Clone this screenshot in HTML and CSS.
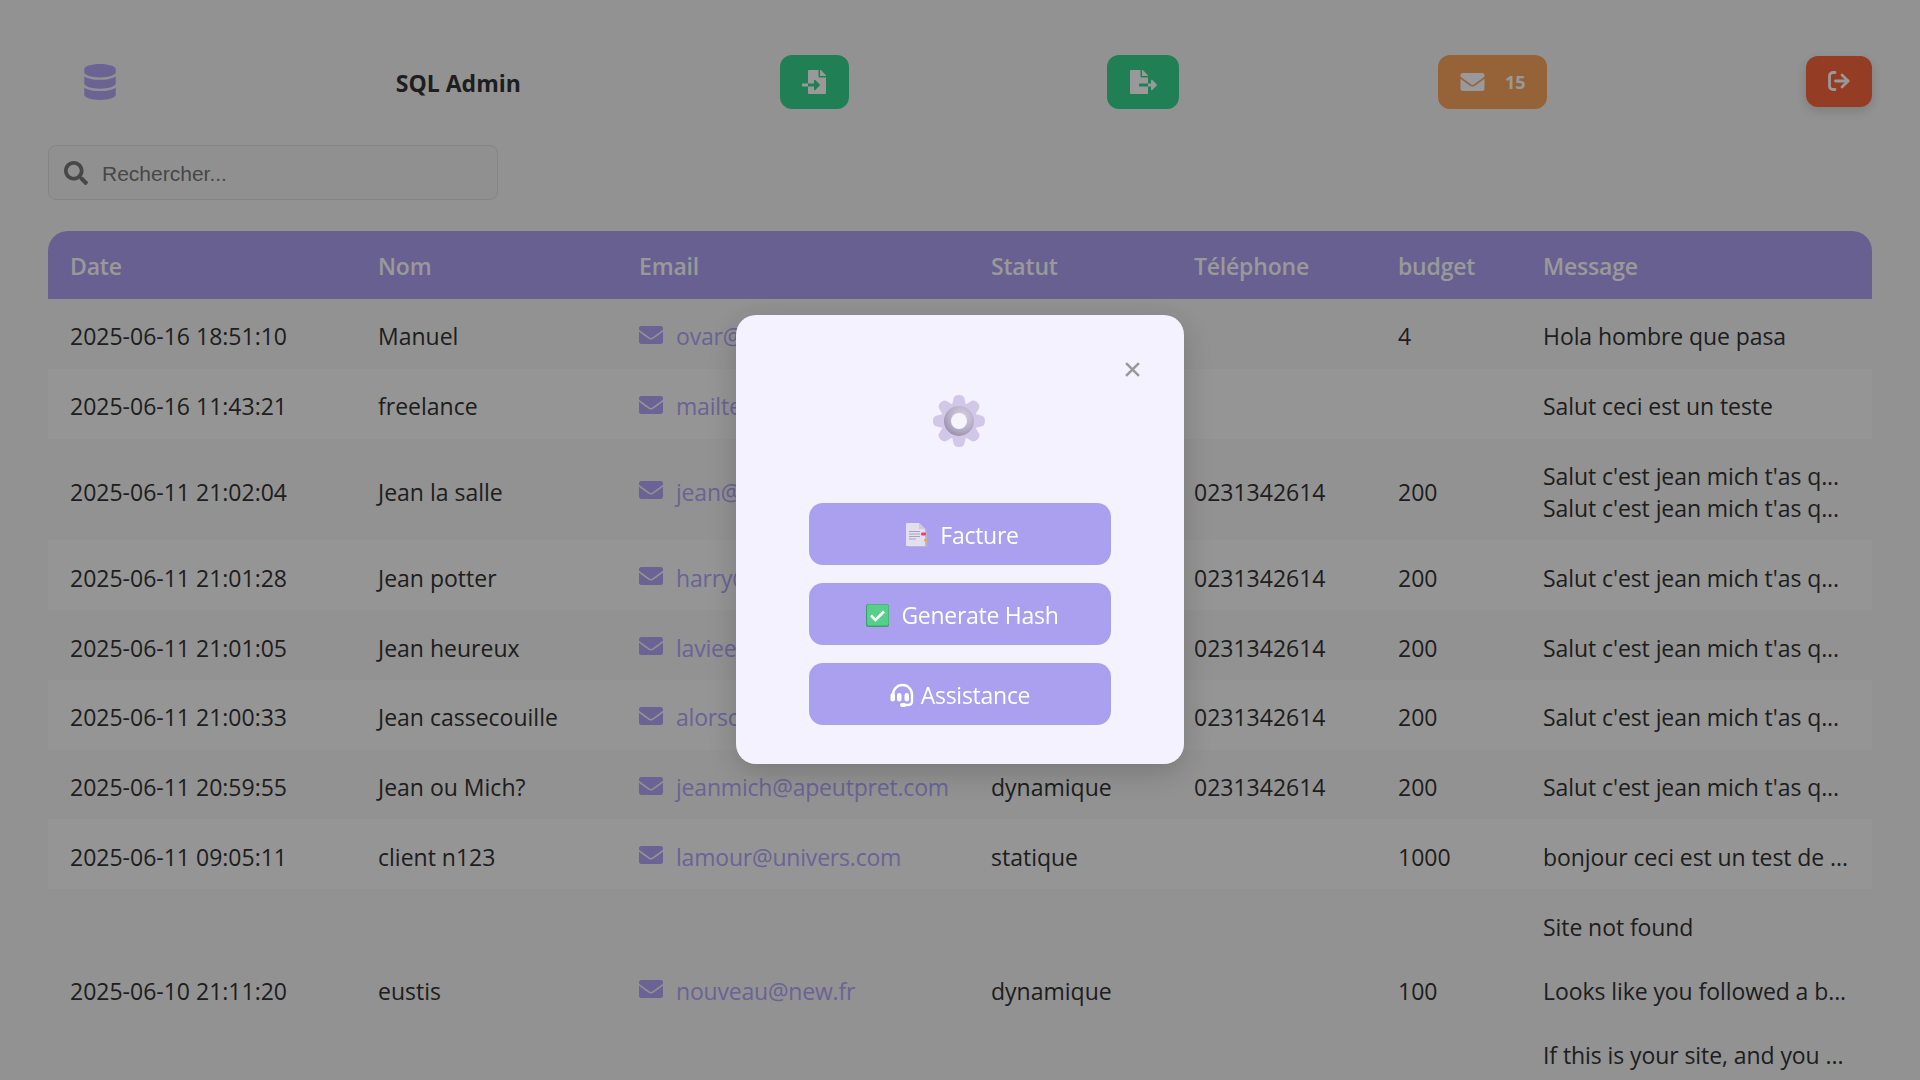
FILE: index.html
```html
<!DOCTYPE html>
<html lang="fr">
<head>
    <meta charset="UTF-8" />
    <title>SQL Admin</title>
    <link rel="stylesheet" href="styles.css">
</head>
<body>
    <svg class="icon-defs" width="0" height="0" aria-hidden="true">
        <symbol id="i-envelope" viewBox="0 64 512 384">
            <path d="M502.3 190.8c3.9-3.1 9.7-.2 9.7 4.7V400c0 26.5-21.5 48-48 48H48c-26.5 0-48-21.5-48-48V195.6c0-5 5.7-7.8 9.7-4.7 22.4 17.4 52.1 39.5 154.1 113.6 21.1 15.4 56.7 47.8 92.2 47.6 35.7.3 72-32.8 92.3-47.6 102-74.1 131.6-96.3 154-113.7zM256 320c23.2.4 56.6-29.2 73.4-41.4 132.7-96.3 142.8-104.7 173.4-128.7 5.8-4.5 9.2-11.5 9.2-18.9v-19c0-26.5-21.5-48-48-48H48C21.5 64 0 85.5 0 112v19c0 7.4 3.4 14.3 9.2 18.9 30.6 23.9 40.7 32.4 173.4 128.7 16.8 12.2 50.2 41.8 73.4 41.4z"/>
        </symbol>
    </svg>

    <header class="topbar">
        <div class="logo">
            <svg viewBox="0 0 448 512" width="32" height="36" fill="currentColor"><path d="M448 73.143v45.714C448 159.143 347.667 192 224 192S0 159.143 0 118.857V73.143C0 32.857 100.333 0 224 0s224 32.857 224 73.143zM448 176v102.857C448 319.143 347.667 352 224 352S0 319.143 0 278.857V176c48.125 33.143 136.208 48.572 224 48.572S399.874 209.143 448 176zm0 160v102.857C448 479.143 347.667 512 224 512S0 479.143 0 438.857V336c48.125 33.143 136.208 48.572 224 48.572S399.874 369.143 448 336z"/></svg>
        </div>
        <h1 class="title">SQL Admin</h1>
        <button class="top-btn btn-import">
            <svg viewBox="0 0 512 512" width="24" height="24" fill="currentColor"><path d="M16 288c-8.800 0-16 7.200-16 16v32c0 8.800 7.200 16 16 16h112v-64zm489-183L407.100 7c-4.500-4.500-10.600-7-17-7H384v128h128v-6.100c0-6.300-2.500-12.400-7-16.900zm-153 31V0H152c-13.300 0-24 10.700-24 24v264h128v-65.200c0-14.300 17.300-21.400 27.400-11.300L379 308c6.600 6.700 6.600 17.400 0 24l-95.700 96.400c-10.100 10.100-27.400 3-27.400-11.300V352H128v136c0 13.300 10.700 24 24 24h336c13.300 0 24-10.700 24-24V160H376c-13.200 0-24-10.800-24-24z"/></svg>
        </button>
        <button class="top-btn btn-export">
            <svg viewBox="0 0 576 512" width="27" height="24" fill="currentColor"><path d="M384 121.900c0-6.300-2.500-12.400-7-16.900L279.100 7c-4.500-4.500-10.600-7-17-7H256v128h128zM571 308l-95.700-96.400c-10.100-10.100-27.400-3-27.400 11.300V288h-64v64h64v65.200c0 14.300 17.300 21.400 27.400 11.300L571 332c6.600-6.700 6.600-17.400 0-24zm-379 28v-32c0-8.800 7.200-16 16-16h176V160H248c-13.200 0-24-10.800-24-24V0H24C10.700 0 0 10.700 0 24v464c0 13.300 10.700 24 24 24h336c13.300 0 24-10.700 24-24V352H208c-8.800 0-16-7.200-16-16z"/></svg>
        </button>
        <button class="top-btn btn-mail">
            <svg width="25" height="18" fill="currentColor"><use href="#i-envelope"/></svg>
            <span>15</span>
        </button>
        <button class="top-btn btn-logout">
            <svg viewBox="0 0 22 20" width="22" height="20" fill="none" stroke="currentColor" stroke-width="2.800" stroke-linecap="round" stroke-linejoin="round"><path d="M7 1.500H5A3.500 3.500 0 0 0 1.500 5v10A3.500 3.500 0 0 0 5 18.500h2"/><path d="M7.500 10h12.500"/><path d="M14 4l6 6-6 6"/></svg>
        </button>
    </header>

    <div class="search-box">
        <svg viewBox="0 0 512 512" width="24" height="24" fill="currentColor"><path d="M505 442.700L405.300 343c-4.500-4.500-10.600-7-17-7H372c27.600-35.300 44-79.700 44-128C416 93.100 322.900 0 208 0S0 93.100 0 208s93.100 208 208 208c48.300 0 92.700-16.400 128-44v16.300c0 6.400 2.500 12.500 7 17l99.700 99.700c9.400 9.400 24.600 9.400 33.900 0l28.300-28.300c9.400-9.400 9.400-24.600.1-34zM208 336c-70.700 0-128-57.200-128-128 0-70.700 57.200-128 128-128 70.700 0 128 57.200 128 128 0 70.700-57.200 128-128 128z"/></svg>
        <input type="text" placeholder="Rechercher...">
    </div>

    <table class="data-table">
        <colgroup>
            <col class="c-date"><col class="c-nom"><col class="c-email"><col class="c-statut"><col class="c-tel"><col class="c-budget"><col class="c-msg">
        </colgroup>
        <thead>
            <tr><th>Date</th><th>Nom</th><th>Email</th><th>Statut</th><th>Téléphone</th><th>budget</th><th>Message</th></tr>
        </thead>
        <tbody>
            <tr>
                <td>2025-06-16 18:51:10</td><td>Manuel</td>
                <td><a href="#" class="mail"><svg width="24" height="18" fill="currentColor"><use href="#i-envelope"/></svg>ovar@gmail.com</a></td>
                <td>dynamique</td><td></td><td>4</td><td class="msg">Hola hombre que pasa</td>
            </tr>
            <tr>
                <td>2025-06-16 11:43:21</td><td>freelance</td>
                <td><a href="#" class="mail"><svg width="24" height="18" fill="currentColor"><use href="#i-envelope"/></svg>mailtest@gmail.com</a></td>
                <td>statique</td><td></td><td></td><td class="msg">Salut ceci est un teste</td>
            </tr>
            <tr>
                <td>2025-06-11 21:02:04</td><td>Jean la salle</td>
                <td><a href="#" class="mail"><svg width="24" height="18" fill="currentColor"><use href="#i-envelope"/></svg>jean@lasalle.com</a></td>
                <td>dynamique</td><td>0231342614</td><td>200</td><td class="msg">Salut c'est jean mich t'as q...<br>Salut c'est jean mich t'as q...</td>
            </tr>
            <tr>
                <td>2025-06-11 21:01:28</td><td>Jean potter</td>
                <td><a href="#" class="mail"><svg width="24" height="18" fill="currentColor"><use href="#i-envelope"/></svg>harry@potter.com</a></td>
                <td>dynamique</td><td>0231342614</td><td>200</td><td class="msg">Salut c'est jean mich t'as q...</td>
            </tr>
            <tr>
                <td>2025-06-11 21:01:05</td><td>Jean heureux</td>
                <td><a href="#" class="mail"><svg width="24" height="18" fill="currentColor"><use href="#i-envelope"/></svg>laviee@belle.com</a></td>
                <td>dynamique</td><td>0231342614</td><td>200</td><td class="msg">Salut c'est jean mich t'as q...</td>
            </tr>
            <tr>
                <td>2025-06-11 21:00:33</td><td>Jean cassecouille</td>
                <td><a href="#" class="mail"><svg width="24" height="18" fill="currentColor"><use href="#i-envelope"/></svg>alorsc@quoi.com</a></td>
                <td>dynamique</td><td>0231342614</td><td>200</td><td class="msg">Salut c'est jean mich t'as q...</td>
            </tr>
            <tr>
                <td>2025-06-11 20:59:55</td><td>Jean ou Mich?</td>
                <td><a href="#" class="mail"><svg width="24" height="18" fill="currentColor"><use href="#i-envelope"/></svg>jeanmich@apeutpret.com</a></td>
                <td>dynamique</td><td>0231342614</td><td>200</td><td class="msg">Salut c'est jean mich t'as q...</td>
            </tr>
            <tr>
                <td>2025-06-11 09:05:11</td><td>client n123</td>
                <td><a href="#" class="mail"><svg width="24" height="18" fill="currentColor"><use href="#i-envelope"/></svg>lamour@univers.com</a></td>
                <td>statique</td><td></td><td>1000</td><td class="msg">bonjour ceci est un test de ...</td>
            </tr>
            <tr class="row-long">
                <td>2025-06-10 21:11:20</td><td>eustis</td>
                <td><a href="#" class="mail"><svg width="24" height="18" fill="currentColor"><use href="#i-envelope"/></svg>nouveau@new.fr</a></td>
                <td>dynamique</td><td></td><td>100</td>
                <td class="msg">
                    <div class="msg-lines">
                        <span>Site not found</span>
                        <span>Looks like you followed a b...</span>
                        <span>If this is your site, and you ...</span>
                    </div>
                </td>
            </tr>
        </tbody>
    </table>

    <div class="overlay">
        <div class="modal">
            <span class="modal-close">
                <svg viewBox="0 0 14 14" width="15" height="15" fill="none" stroke="currentColor" stroke-width="2.400"><path d="M1 1l12 12M13 1L1 13"/></svg>
            </span>
            <svg class="gear" viewBox="0 0 52 52" width="52" height="52">
                <defs>
                    <radialGradient id="ring" cx="0.6" cy="0.35" r="0.75">
                        <stop offset="0" stop-color="#d8d2e4"/>
                        <stop offset="0.6" stop-color="#b5aec6"/>
                        <stop offset="1" stop-color="#8f88a3"/>
                    </radialGradient>
                    <path id="lobe" d="M20.500 4Q21 0 26 0T31.500 4L35 18H17Z"/>
                </defs>
                <g fill="#d1c7e8">
                    <circle cx="26" cy="26" r="17"/>
                    <use href="#lobe"/>
                    <use href="#lobe" transform="rotate(45 26 26)"/>
                    <use href="#lobe" transform="rotate(90 26 26)"/>
                    <use href="#lobe" transform="rotate(135 26 26)"/>
                    <use href="#lobe" transform="rotate(180 26 26)"/>
                    <use href="#lobe" transform="rotate(225 26 26)"/>
                    <use href="#lobe" transform="rotate(270 26 26)"/>
                    <use href="#lobe" transform="rotate(315 26 26)"/>
                </g>
                <circle cx="26" cy="26" r="15" fill="url(#ring)"/>
                <circle cx="26" cy="26" r="8" fill="#f6f4fe"/>
            </svg>

            <button class="modal-btn">
                <svg viewBox="0 0 22 24" width="22" height="24">
                    <path d="M2 1.500h13l6 6V23a1 1 0 0 1-1 1H3a1 1 0 0 1-1-1z" fill="#bcb4cc"/>
                    <path d="M0 1a1 1 0 0 1 1-1h12l6 6v16a1 1 0 0 1-1 1H1a1 1 0 0 1-1-1z" fill="#e4dff0"/>
                    <path d="M13 0l6 6h-6z" fill="#cfc9dc"/>
                    <path d="M3 8.500h11M3 11h11M3 13.500h11M3 16h7" stroke="#a9a3b8" stroke-width="1.200"/>
                    <rect x="15" y="9.500" width="5" height="3" rx="1" fill="#e8436e"/>
                    <rect x="18" y="16" width="4" height="2.500" rx="1" fill="#e9a94a"/>
                </svg>
                <span>Facture</span>
            </button>
            <button class="modal-btn">
                <svg viewBox="0 0 23 23" width="23" height="23">
                    <rect width="23" height="23" rx="2.500" fill="#3f9f6c"/>
                    <rect x="1" y="0.500" width="21.500" height="21" rx="2" fill="#57cf8a"/>
                    <path d="M5 11.500l4.500 4.500 8.500-8.500" fill="none" stroke="#fff" stroke-width="2.600"/>
                </svg>
                <span>Generate Hash</span>
            </button>
            <button class="modal-btn btn-assist">
                <svg viewBox="0 0 24 24" width="24" height="24" fill="none" stroke="#fff" stroke-linecap="round">
                    <path d="M3 14V11.500a9.500 9.500 0 0 1 19 0V18q0 4-4 4h-5" stroke-width="2.400"/>
                    <rect x="0.500" y="10" width="4.500" height="8.500" rx="2.200" fill="#fff" stroke="none"/>
                    <rect x="7" y="10" width="4.500" height="8.500" rx="2.200" fill="#fff" stroke="none"/>
                    <rect x="14.500" y="10" width="4.500" height="8.500" rx="2.200" fill="#fff" stroke="none"/>
                    <rect x="10" y="20" width="6" height="4" rx="2" fill="#fff" stroke="none"/>
                </svg>
                <span>Assistance</span>
            </button>
        </div>
    </div>
</body>
</html>
```

FILE: styles.css
```css
html, body {
    height: 100%;
    overflow: hidden;
}
body {
    margin: 0;
    padding: 55px 48px 0;
    box-sizing: border-box;
    background-color: #f4f4f4;
    color: #333;
    font-family: "Open Sans", "Noto Sans", sans-serif;
    font-size: 23px;
}
.icon-defs {
    position: absolute;
}

/* Barre du haut */
.topbar {
    display: flex;
    justify-content: space-between;
    align-items: center;
}
.logo {
    width: 88px;
    padding-left: 36px;
    box-sizing: border-box;
    display: flex;
    color: #b1a5f7;
}
.title {
    margin: 0;
    padding: 2px 0 0 1px;
    font-size: 23px;
    font-weight: 700;
}
.top-btn {
    display: flex;
    align-items: center;
    justify-content: center;
    height: 54px;
    border: none;
    border-radius: 12px;
    color: white;
    padding: 0;
    font-family: inherit;
}
.btn-import {
    width: 69px;
    background-color: #38d48e;
}
.btn-export {
    width: 72px;
    background-color: #38d48e;
}
.btn-mail {
    width: 109px;
    gap: 20px;
    background-color: #f8a55d;
    font-size: 18px;
    font-weight: 700;
}
.btn-logout {
    width: 66px;
    height: 51px;
    margin-bottom: 1px;
    padding-bottom: 2px;
    background-color: #f8643f;
    box-shadow: 0 4px 12px rgba(0,0,0,0.15);
}

/* Recherche */
.search-box {
    display: flex;
    align-items: center;
    gap: 12px;
    width: 450px;
    height: 55px;
    margin-top: 36px;
    padding-left: 15px;
    box-sizing: border-box;
    border: 1px solid #ddd;
    border-radius: 8px;
    background-color: #f0f0f0;
    color: #777;
}
.search-box input {
    flex: 1;
    min-width: 0;
    padding: 3px 2px 1px;
    border: none;
    outline: none;
    background: transparent;
    font-family: "Liberation Sans", Arial, sans-serif;
    font-size: 21px;
}
.search-box input::placeholder {
    color: #777;
    opacity: 1;
}

/* Tableau */
.data-table {
    width: 1824px;
    margin-top: 31px;
    table-layout: fixed;
    border-collapse: separate;
    border-spacing: 0;
    line-height: 32px;
}
.c-date { width: 308px; }
.c-nom { width: 261px; }
.c-email { width: 352px; }
.c-statut { width: 203px; }
.c-tel { width: 204px; }
.c-budget { width: 145px; }
.c-msg { width: 351px; }
.data-table th {
    height: 68px;
    padding: 2px 22px 0;
    box-sizing: border-box;
    background-color: #aca0f0;
    color: white;
    font-weight: 600;
    letter-spacing: -0.2px;
    text-align: left;
}
.data-table th:first-child {
    border-top-left-radius: 20px;
}
.data-table th:last-child {
    border-top-right-radius: 20px;
}
.data-table td {
    padding: 21.4px 22px 15.4px;
    border-bottom: 1px solid transparent;
    white-space: nowrap;
    overflow: hidden;
}
.data-table tbody tr:nth-child(even) td {
    background-color: #f9f9f9;
}
.data-table .row-long td {
    padding: 18.4px 22px;
}
.msg {
    letter-spacing: -0.08px;
}
.mail {
    display: inline-flex;
    align-items: center;
    vertical-align: top;
    gap: 13px;
    color: #b1a5f7;
    letter-spacing: -0.2px;
    text-decoration: none;
}
.mail svg {
    margin-bottom: 3px;
}
.msg-lines {
    display: flex;
    flex-direction: column;
    gap: 32px;
    padding: 3px 0;
}

/* Fenêtre par-dessus la page */
.overlay {
    position: fixed;
    inset: 0;
    display: flex;
    align-items: center;
    justify-content: center;
    padding-bottom: 1px;
    background-color: rgba(0,0,0,0.4);
}
.modal {
    position: relative;
    display: flex;
    flex-direction: column;
    align-items: center;
    gap: 18px;
    width: 448px;
    height: 449px;
    padding: 80px 73px 39px;
    box-sizing: border-box;
    border-radius: 20px;
    background-color: #f4f2fe;
    box-shadow: 0 8px 32px rgba(0,0,0,0.2);
}
.modal-close {
    position: absolute;
    top: 47px;
    right: 44px;
    display: flex;
    color: #999;
}
.gear {
    margin: 0 2px 38px 0;
    flex-shrink: 0;
}
.modal-btn {
    display: flex;
    align-items: center;
    justify-content: center;
    gap: 12px;
    width: 302px;
    height: 62px;
    flex-shrink: 0;
    padding: 2px 0 0 5px;
    border: none;
    border-radius: 14px;
    background-color: #ab9fef;
    color: white;
    font-family: inherit;
    font-size: 23px;
    letter-spacing: -0.27px;
}
.btn-assist {
    gap: 7px;
    padding: 2px 0 0;
}
```
